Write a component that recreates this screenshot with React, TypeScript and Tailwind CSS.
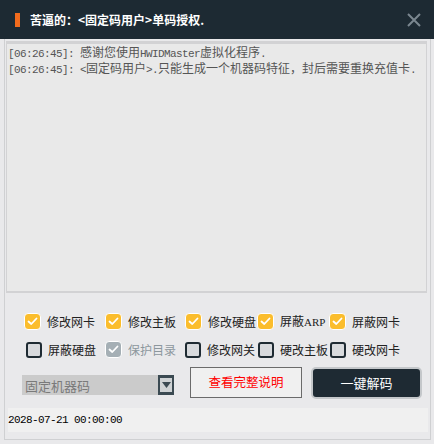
import React from "react";

const cjk = "font-['Noto_Sans_CJK_SC',sans-serif]";
const mono = "font-['Liberation_Mono','Noto_Sans_CJK_SC',monospace] text-[11px] tracking-[-0.6px]";

function Check({ state }: { state: "on" | "off" | "dis" }) {
  if (state === "off") {
    return <span className="w-[16px] h-[16px] rounded-[3px] border-2 border-[#1f2b33] bg-[#d8dadd] shrink-0" />;
  }
  const bg = state === "on" ? "bg-[#fbbd2c]" : "bg-[#a5afb5]";
  return (
    <span className={`w-[17px] h-[17px] rounded-[4px] border border-white ${bg} shrink-0 flex items-center justify-center`}>
      <svg width="11" height="9" viewBox="0 0 11 9">
        <path d="M1.5 4.5 L4.3 7 L9.5 1.5" fill="none" stroke="white" strokeWidth="1.8" strokeLinecap="round" strokeLinejoin="round" />
      </svg>
    </span>
  );
}

function Opt({ label, state }: { label: React.ReactNode; state: "on" | "off" | "dis" }) {
  return (
    <div className="flex items-center gap-[6px]">
      <Check state={state} />
      <span className={`text-[12px] leading-none ${state === "dis" ? "text-[#8c979d]" : "text-[#222]"}`}>{label}</span>
    </div>
  );
}

export default function App() {
  return (
    <div className={`w-[434px] h-[444px] bg-[#e9e9eb] flex flex-col ${cjk}`}>
      {/* title bar */}
      <div className="h-[39px] bg-[#1d2a33] flex items-center shrink-0">
        <span className="ml-[15px] w-[5px] h-[14px] bg-[#f26b1d]" />
        <span className="ml-[10px] text-white text-[12px] font-bold">
          苦逼的：&lt;固定码用户&gt;单码授权.
        </span>
        <svg className="ml-auto mr-[13px]" width="14" height="14" viewBox="0 0 14 14">
          <path d="M1 1 L13 13 M13 1 L1 13" stroke="#7b8790" strokeWidth="2" />
        </svg>
      </div>

      {/* frame */}
      <div className="ml-[4px] w-[427px] h-[401px] border-x border-b border-[#cfd0d2] flex flex-col">
        {/* log */}
        <div className="ml-[1px] mt-[2px] w-[421px] h-[252px] border-t-[3px] border-b-2 border-x border-[#d2d2d4] bg-[#e9e9e9] pt-[1px] pl-[1px] text-[#555] text-[12px] leading-[13px]">
          <div className="whitespace-nowrap">
            <span className={mono}>[06:26:45]: </span>感谢您使用<span className={mono}>HWIDMaster</span>虚拟化程序<span className={mono}>.</span>
          </div>
          <div className="whitespace-nowrap">
            <span className={mono}>[06:26:45]: &lt;</span>固定码用户<span className={mono}>&gt;.</span>只能生成一个机器码特征，封后需要重换充值卡<span className={mono}>.</span>
          </div>
        </div>

        {/* options */}
        <div className="mt-[20px] pl-[19px] grid grid-cols-[81px_80px_72px_72px_auto] h-[17px] items-center">
          <Opt label="修改网卡" state="on" />
          <Opt label="修改主板" state="on" />
          <Opt label="修改硬盘" state="on" />
          <Opt label={<>屏蔽<span className="font-['Liberation_Serif',serif] text-[11px]">ARP</span></>} state="on" />
          <Opt label="屏蔽网卡" state="on" />
        </div>
        <div className="mt-[11px] pl-[21px] grid grid-cols-[79px_80px_73px_72px_auto] h-[17px] items-center">
          <Opt label="屏蔽硬盘" state="off" />
          <Opt label="保护目录" state="dis" />
          <Opt label="修改网关" state="off" />
          <Opt label="硬改主板" state="off" />
          <Opt label="硬改网卡" state="off" />
        </div>

        {/* actions */}
        <div className="mt-[9px] flex items-start h-[32px]">
          <div className="ml-[17px] mt-[8px] w-[152px] h-[20px] bg-[#cbcbcb] flex items-center">
            <span className="ml-[3px] text-[13px] text-[#7a7a7a] leading-none">固定机器码</span>
            <span className="ml-auto w-[16px] h-[20px] bg-[#3b4a52] border-2 border-[#3b4a52] flex items-center justify-center">
              <span className="w-[12px] h-[14px] bg-[#cfd3d5] flex items-center justify-center">
                <svg width="9" height="6" viewBox="0 0 9 6">
                  <path d="M0 0 H9 L4.5 6 Z" fill="#3b4a52" />
                </svg>
              </span>
            </span>
          </div>
          <button className="ml-[16px] w-[112px] h-[31px] border border-[#6b6b6b] bg-[#f0f0f0] text-[#ff0000] text-[12.5px]">
            查看完整说明
          </button>
          <button className="ml-[9px] w-[111px] h-[32px] rounded-[5px] border-2 border-[#c4c7ca] bg-[#1e2a33] text-white text-[13px]">
            一键解码
          </button>
        </div>

        {/* status */}
        <div className="mt-[9px] ml-[3px] w-[420px] h-[24px] bg-[#f0f0f0] flex items-center">
          <span className={`${mono} text-black`}>2028-07-21 00:00:00</span>
        </div>
      </div>
    </div>
  );
}
